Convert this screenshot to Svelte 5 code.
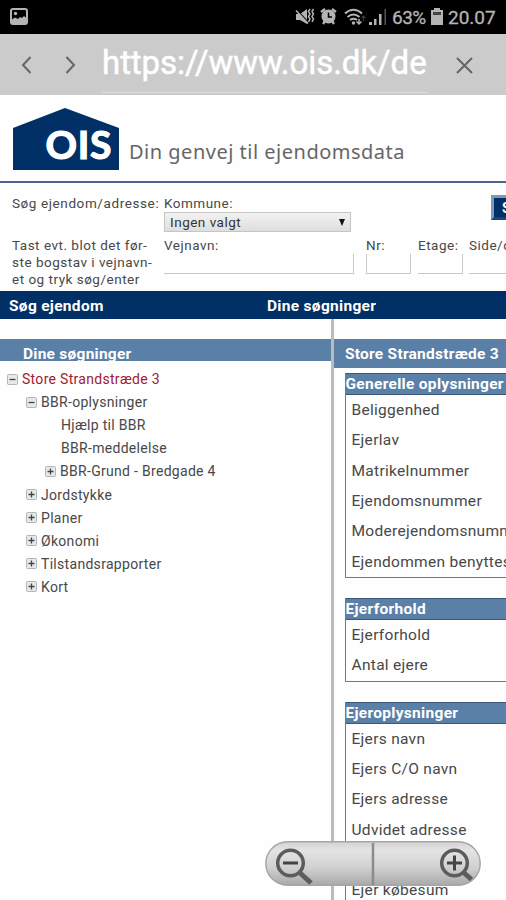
<script>
	const tree = [
		{ label: 'Store Strandstræde 3', level: 0, icon: 'minus', active: true },
		{ label: 'BBR-oplysninger', level: 1, icon: 'minus' },
		{ label: 'Hjælp til BBR', level: 2, icon: '' },
		{ label: 'BBR-meddelelse', level: 2, icon: '' },
		{ label: 'BBR-Grund - Bredgade 4', level: 2, icon: 'plus' },
		{ label: 'Jordstykke', level: 1, icon: 'plus' },
		{ label: 'Planer', level: 1, icon: 'plus' },
		{ label: 'Økonomi', level: 1, icon: 'plus' },
		{ label: 'Tilstandsrapporter', level: 1, icon: 'plus' },
		{ label: 'Kort', level: 1, icon: 'plus' }
	];

	const sections = [
		{
			title: 'Generelle oplysninger',
			rows: ['Beliggenhed', 'Ejerlav', 'Matrikelnummer', 'Ejendomsnummer', 'Moderejendomsnummer', 'Ejendommen benyttes']
		},
		{ title: 'Ejerforhold', rows: ['Ejerforhold', 'Antal ejere'] },
		{
			title: 'Ejeroplysninger',
			rows: ['Ejers navn', 'Ejers C/O navn', 'Ejers adresse', 'Udvidet adresse', '', 'Ejer købesum']
		}
	];

	let kommune = $state('Ingen valgt');
</script>

<div class="screen">
	<div class="status">
		<svg class="picture" width="18" height="17" viewBox="0 0 18 17">
			<rect x="1" y="1" width="16" height="15" rx="2" fill="none" stroke="#b4b4b4" stroke-width="2" />
			<path d="M1 12l4-2.500 3 1.500 2-2 2 1 2-2 3 2.500V16H1z" fill="#b4b4b4" />
			<circle cx="5.500" cy="5.500" r="1.700" fill="#b4b4b4" />
		</svg>
		<div class="status-right">
			<svg class="mute" width="20" height="18" viewBox="0 0 20 18">
				<path d="M1 6h4l7-5v15l-7-4H1z" fill="#b4b4b4" />
				<path d="M1 1l12 13" stroke="#000" stroke-width="1.2" />
				<path d="M1 2.500l12 13M15 1l-1.500 2.500 1.500 2.500-1.500 2.500 1.500 2.500-1.500 3M18.500 1L17 3.500 18.500 6 17 8.500l1.500 2.500-1.500 3" fill="none" stroke="#b4b4b4" stroke-width="1.500" />
			</svg>
			<svg class="alarm" width="17" height="17" viewBox="0 0 17 17">
				<path d="M1 4l4-3M16 4l-4-3M3 16l2-3M14 16l-2-3" stroke="#b4b4b4" stroke-width="2.300" />
				<circle cx="8.500" cy="8.500" r="7" fill="#b4b4b4" />
				<path d="M8.500 4.500v4.500h3.500" fill="none" stroke="#000" stroke-width="1.500" />
			</svg>
			<svg class="wifi" width="22" height="18" viewBox="0 0 22 18">
				<g fill="none" stroke="#b4b4b4" stroke-width="2">
					<path d="M1 5.500Q9.500-2 18 5.500M3.500 9Q9.500 4 15.500 9M6 12Q9.500 9.500 13 12" />
				</g>
				<circle cx="9.500" cy="15" r="1.700" fill="#b4b4b4" />
				<path d="M15 11v5m-2.500-2.500L15 16l2.500-2.500" fill="none" stroke="#b4b4b4" stroke-width="1.500" />
				<path d="M19.500 13V8m-2 2l2-2 2 2" fill="none" stroke="#3a3a3a" stroke-width="1.200" />
			</svg>
			<svg class="signal" width="18" height="17" viewBox="0 0 18 17">
				<path d="M0 14h3v3H0zM5 11h2.500v6H5zM10 6h2.500v11H10z" fill="#b4b4b4" />
				<path d="M15.500 1H17v16h-1.500z" fill="#555" />
			</svg>
			<span class="percent">63%</span>
			<svg class="battery" width="12" height="17" viewBox="0 0 12 17">
				<path d="M3 0h6v2h3v15H0V2h3z" fill="#b4b4b4" />
				<path d="M2 4h8v3H2z" fill="#444" />
			</svg>
			<span class="clock">20.07</span>
		</div>
	</div>

	<div class="browser">
		<svg class="prev" width="11" height="18" viewBox="0 0 11 18"><path d="M9.500 1L2 9l7.500 8" /></svg>
		<svg class="next" width="11" height="18" viewBox="0 0 11 18"><path d="M1.500 1L9 9l-7.500 8" /></svg>
		<div class="url">https://www.ois.dk/de</div>
		<svg class="close" width="17" height="17" viewBox="0 0 17 17"><path d="M1 1l15 15M16 1L1 16" /></svg>
	</div>

	<header class="brand">
		<svg class="logo" width="106" height="62" viewBox="0 0 106 62">
			<path d="M0 20L52 0l54 20v42H0z" fill="#003066" />
			<text x="32.500" y="50.500" textLength="66" lengthAdjust="spacing">OIS</text>
		</svg>
		<span class="slogan">Din genvej til ejendomsdata</span>
	</header>

	<form class="search" onsubmit={(e) => e.preventDefault()}>
		<div class="hint">
			<p>Søg ejendom/adresse:</p>
			<p class="tip">Tast evt. blot det før-<br />ste bogstav i vejnavn-<br />et og tryk søg/enter</p>
		</div>
		<div class="fields">
			<div class="top-row">
				<div>
					<div class="label">Kommune:</div>
					<div class="select"><span>{kommune}</span><i></i></div>
				</div>
				<button>Søg</button>
			</div>
			<div class="inputs">
				<label class="vej">Vejnavn:<b></b></label>
				<label class="nr">Nr:<b></b></label>
				<label class="etage">Etage:<b></b></label>
				<label class="side">Side/dør:<b></b></label>
			</div>
		</div>
	</form>

	<nav class="tabs">
		<span class="tab-search">Søg ejendom</span>
		<span class="tab-mine">Dine søgninger</span>
	</nav>

	<main>
		<aside>
			<h2>Dine søgninger</h2>
			<ul>
				{#each tree as node}
					<li class="level{node.level}" class:active={node.active} class:leaf={!node.icon}>
						{#if node.icon}
							<svg width="11" height="11" viewBox="0 0 11 11">
								<rect x=".5" y=".5" width="10" height="10" rx="1" fill="#e6e9eb" stroke="#b0b6ba" />
								<path d={node.icon === 'plus' ? 'M2.500 5.500h6M5.500 2.500v6' : 'M2.500 5.500h6'} stroke="#444" stroke-width="1.300" />
							</svg>
						{/if}
						<span>{node.label}</span>
					</li>
				{/each}
			</ul>
		</aside>

		<section class="details">
			<h2>Store Strandstræde 3</h2>
			{#each sections as section}
				<div class="box">
					<h3>{section.title}</h3>
					{#each section.rows as row}
						<div class="row">{row}</div>
					{/each}
				</div>
			{/each}
		</section>
	</main>

	<div class="zoom">
		<svg width="216" height="45" viewBox="0 0 216 45">
			<defs>
				<linearGradient id="pill" x1="0" y1="0" x2="0" y2="1">
					<stop offset="0" stop-color="#d2d2d2" />
					<stop offset=".2" stop-color="#e4e4e4" />
					<stop offset=".6" stop-color="#d0d0d0" />
					<stop offset="1" stop-color="#a9a9a9" />
				</linearGradient>
			</defs>
			<rect x=".8" y=".8" width="214.400" height="43.400" rx="21.700" fill="url(#pill)" stroke="#a5a5a5" stroke-width="1.400" />
			<path d="M108 2v42" stroke="#8b8b8b" stroke-width="2.500" />
			<g fill="none" stroke="#5c5c5c">
				<circle cx="25.500" cy="22" r="12.800" stroke-width="3.500" />
				<path d="M34 31l12 11" stroke-width="5" />
				<circle cx="189.500" cy="22" r="12.800" stroke-width="3.500" />
				<path d="M198 31l8.500 7.500" stroke-width="5" />
			</g>
			<path d="M18 22h15M182 22h15M189.500 14.500v15" stroke="#444" stroke-width="3" />
		</svg>
	</div>
</div>

<style>
	:global(body) { margin: 0; overflow: hidden; }
	.screen {
		position: relative; width: 506px; height: 900px; overflow: hidden;
		background: #fefefe; color: #484848; font-family: Roboto, sans-serif; white-space: nowrap;
	}
	h2, h3, p, ul { margin: 0; padding: 0; }
	svg { display: block; flex: none; }

	.status { display: flex; justify-content: space-between; height: 34px; background: #000; color: #b4b4b4; box-sizing: border-box; padding: 8px 10px 0 10px; }
	.status-right { display: flex; }
	.mute { margin-right: 5px; }
	.alarm { margin-right: 7px; }
	.wifi { margin-right: 3px; }
	.signal { margin-right: 5px; }
	.percent { width: 39px; font-size: 19px; line-height: 19px; letter-spacing: -0.5px; }
	.battery { margin-right: 5px; }
	.clock { width: 48px; font-size: 19px; line-height: 19px; }
	.percent, .clock { -webkit-text-stroke: 0.3px #b4b4b4; }

	.browser { display: flex; height: 61px; background: #cbcbcb; }
	.browser path { fill: none; stroke: #666; stroke-width: 2; }
	.prev { margin: 22px 0 0 21px; }
	.next { margin: 22px 0 0 33px; }
	.url { box-sizing: border-box; width: 326px; height: 59px; margin-left: 26px; border-bottom: 1px solid #dcdcdc; color: #fff; font-size: 33px; line-height: 57px; letter-spacing: -0.05px; -webkit-text-stroke: 0.5px #fff; overflow: hidden; }
	.close { margin: 23px 0 0 28px; }

	.brand { display: flex; height: 86px; border-bottom: 2px solid #4b6690; }
	.logo { margin: 13px 0 0 13px; }
	.logo text { font: 700 39px Lato, sans-serif; fill: #fff; stroke: #fff; stroke-width: 1.2; }
	.slogan { margin: 43px 0 0 10px; font: 20px/27px "Noto Sans", sans-serif; letter-spacing: 0.5px; color: #666; }

	.search { display: flex; height: 108px; font-size: 13.5px; line-height: 17px; letter-spacing: 0.5px; }
	.hint { box-sizing: border-box; flex: none; width: 164px; padding: 12px 0 0 12px; }
	.hint p:first-child { letter-spacing: 0.6px; }
	.tip { margin-top: 25px; }
	.fields { flex: none; padding-top: 12px; }
	.top-row { display: flex; justify-content: space-between; width: 373px; height: 42px; }
	.select { display: flex; justify-content: space-between; align-items: center; box-sizing: border-box; width: 187px; height: 20px; padding: 0 5px; border: 1px solid #c5c5c5; background: linear-gradient(#f2f2f2, #dedede); color: #333; }
	.select i { border: 3.5px solid transparent; border-top: 7px solid #111; border-bottom: 0; }
	button { width: 46px; height: 25px; padding: 0 0 0 8px; border: 3px solid #174575; border-color: #7d9aba #174575 #174575 #7d9aba; background: #003066; color: #fff; font: 700 14px Roboto, sans-serif; text-align: left; }
	.inputs { display: flex; }
	.inputs b { display: block; box-sizing: border-box; height: 20px; border: solid #c8c8c8; border-width: 0 1px 1px 0; }
	.vej { width: 190px; margin-right: 12px; }
	.nr { width: 45px; margin-right: 7px; }
	.nr b { border-left-width: 1px; }
	.etage { width: 45px; margin-right: 6px; }
	.side { width: 80px; }

	.tabs { display: flex; height: 28px; background: #003066; color: #fff; font-weight: 700; font-size: 15.5px; line-height: 30px; letter-spacing: 0.3px; }
	.tab-search { width: 258px; padding-left: 9px; }

	main { display: flex; height: 581px; }
	aside { box-sizing: border-box; width: 334px; padding-top: 20px; border-right: 3px solid #bbb; flex: none; }
	h2 { background: #5b80a8; color: #fff; font-size: 15.5px; font-weight: 700; letter-spacing: 0.25px; }
	aside h2 { height: 22px; padding-left: 23px; line-height: 30px; overflow: hidden; }
	ul { list-style: none; padding-top: 6.500px; }
	li { display: flex; align-items: center; height: 23.1px; font-size: 14px; letter-spacing: 0.3px; }
	li svg { margin-right: 4px; }
	.level0 { padding-left: 7px; }
	.level1 { padding-left: 26px; }
	.level2 { padding-left: 45px; }
	.leaf { padding-left: 61px; }
	.active { color: #a02034; }

	.details { width: 200px; flex: none; padding-top: 20px; }
	.details h2 { height: 29px; padding-left: 11px; line-height: 30px; }
	.box { margin: 5px 0 20px 10.500px; width: 200px; border: 1px solid #777; border-width: 0 0 1px 1.500px; }
	.box + .box { margin-top: 0; }
	h3 { box-sizing: border-box; height: 22px; border-top: 1px solid #3c5878; border-bottom: 1px solid #3c5878; background: #5b80a8; color: #fff; font-size: 15.5px; font-weight: 700; line-height: 21px; letter-spacing: 0.3px; }
	.row { height: 30.35px; padding-left: 6px; font-size: 15.5px; line-height: 31px; letter-spacing: 0.3px; }
	.zoom { position: absolute; left: 265px; top: 841px; }
</style>
